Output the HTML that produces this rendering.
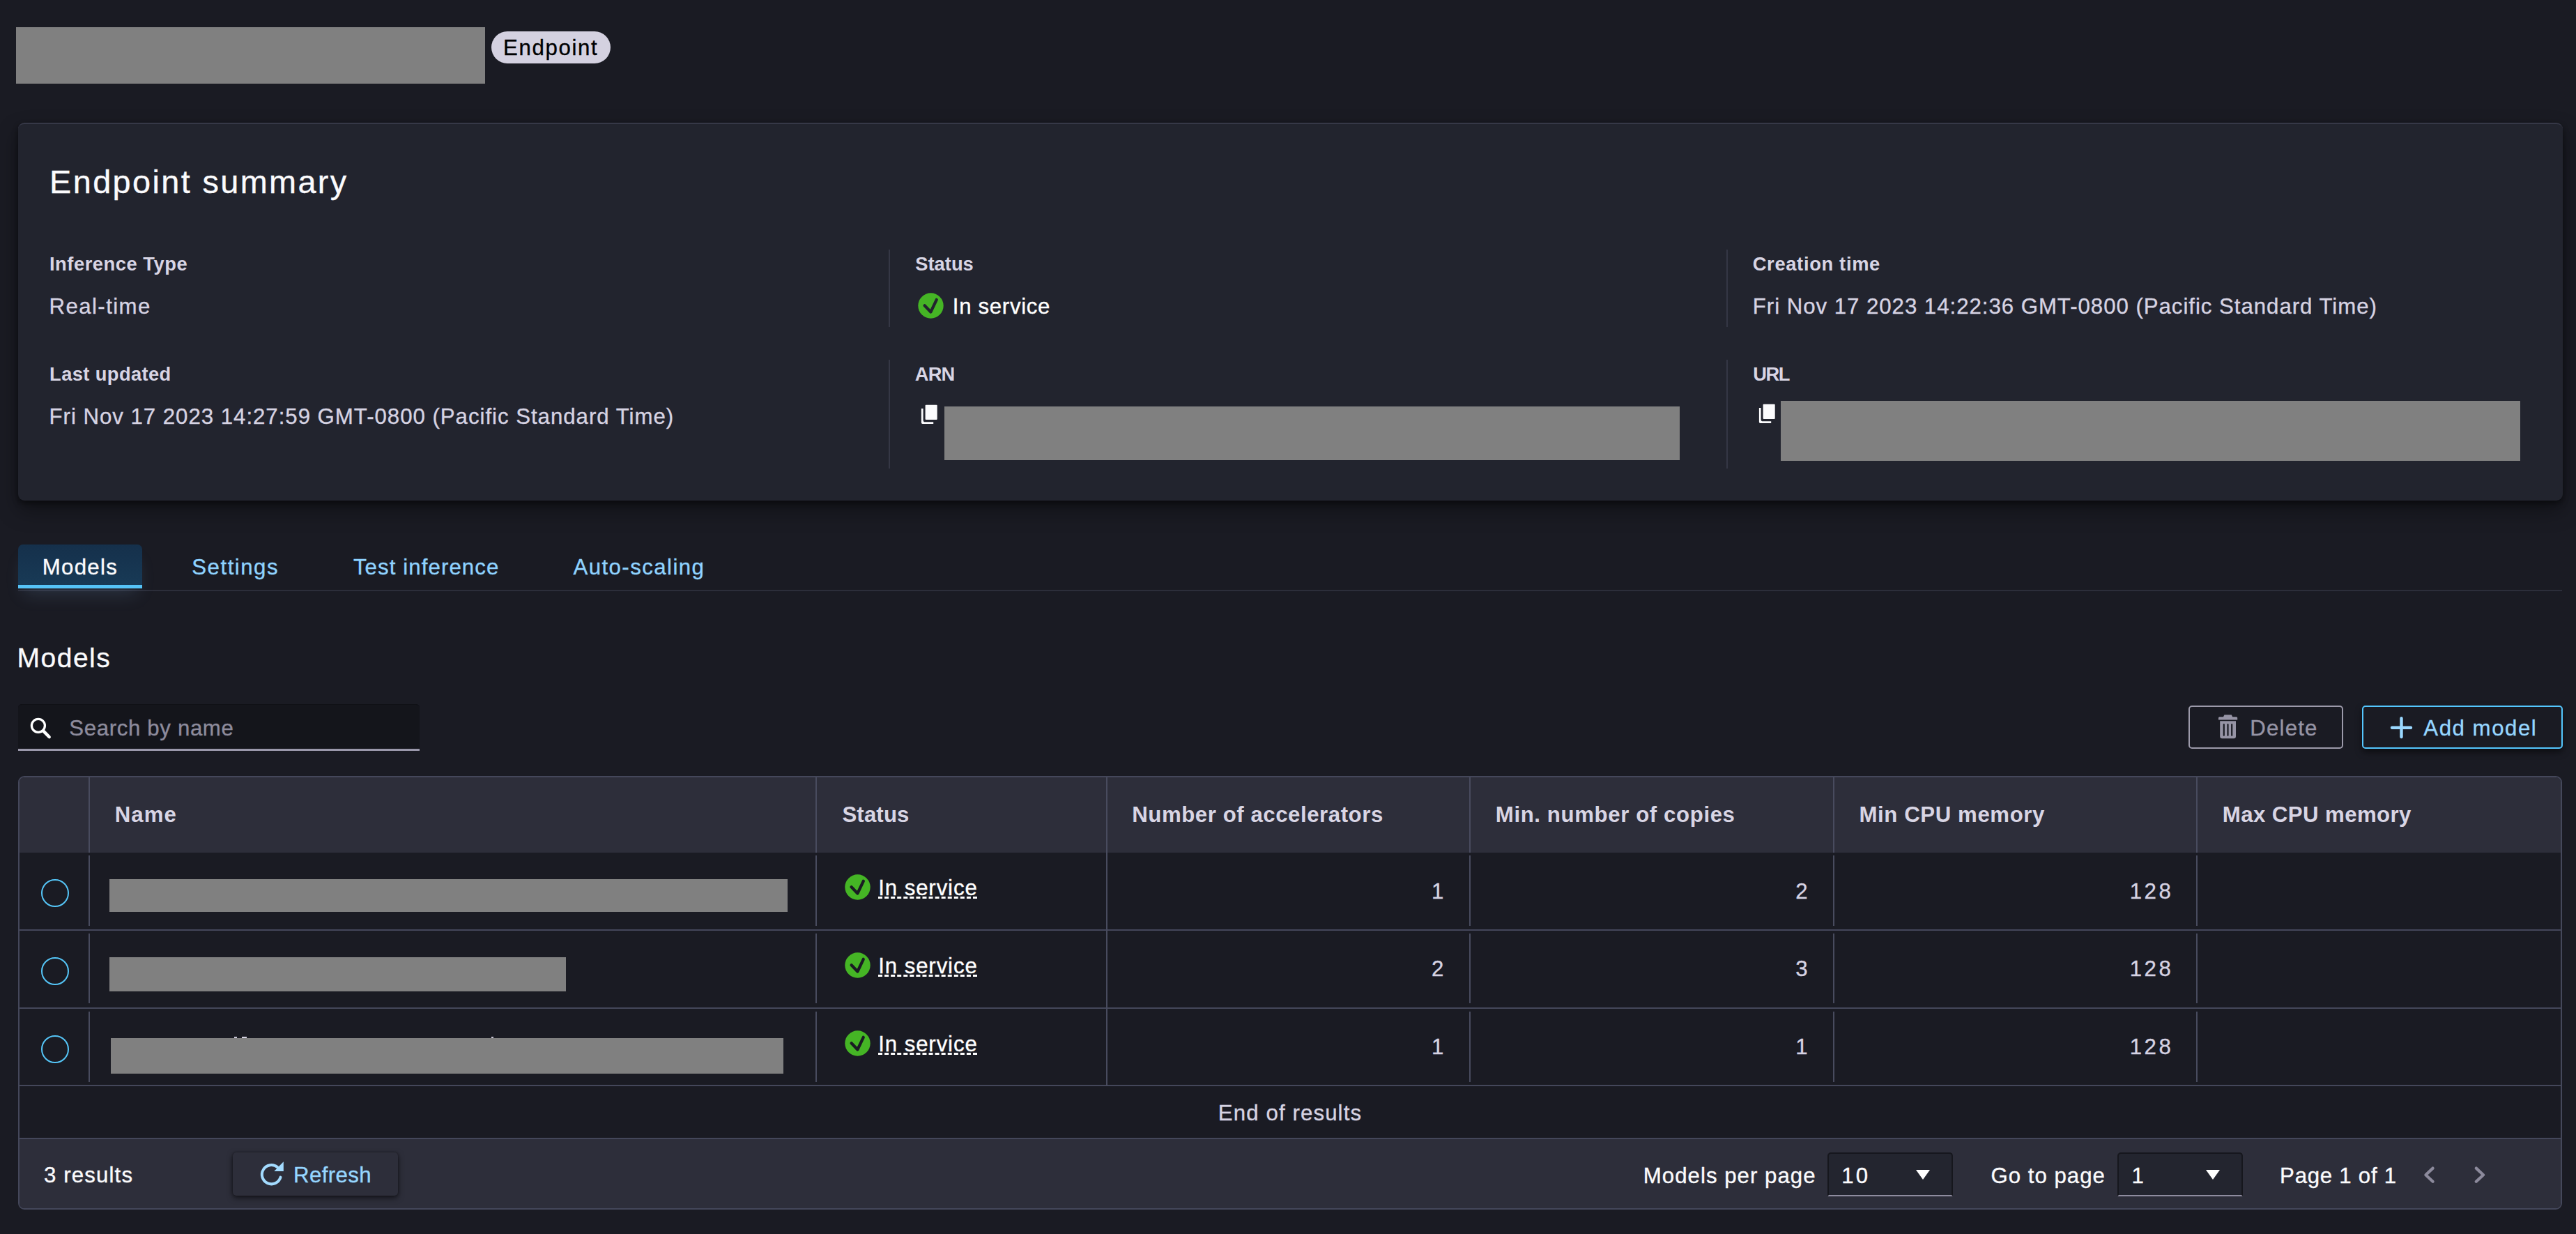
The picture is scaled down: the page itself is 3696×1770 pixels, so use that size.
<!DOCTYPE html>
<html lang="en">
<head>
<meta charset="utf-8">
<title>Endpoint details</title>
<style>
html,body{margin:0;padding:0}
body{width:3696px;height:1770px;background:#1a1b23;position:relative;overflow:hidden;font-family:"Liberation Sans", sans-serif}
h2,dl,dt,dd{margin:0;padding:0}
.t{position:absolute;margin:0;white-space:nowrap;font-family:"Liberation Sans", sans-serif;font-weight:400;-webkit-text-stroke:0.35px currentColor}
.t.bd{font-weight:700;-webkit-text-stroke:0}
.lnk{text-decoration:underline dashed;text-decoration-thickness:3px;text-underline-offset:1.5px;text-decoration-skip-ink:none}
.b{position:absolute;box-sizing:border-box}
.g{background:#808080}
.card{left:26px;top:176px;width:3651px;height:542px;background:#22242e;border-radius:9px;border-top:2px solid #363847;box-shadow:0 14px 30px rgba(0,0,0,.36),0 4px 8px rgba(0,0,0,.45)}
.vd{width:2px;background:#353745}
.badge{left:705px;top:45px;width:171px;height:46px;border-radius:23px;background:#d4d1e0}
.tab{left:26px;top:781px;width:178px;height:63px;border-radius:7px 7px 0 0;background:linear-gradient(#15304b,#183a56);border-bottom:5px solid #55c3f7;box-shadow:0 16px 26px -8px rgba(130,175,225,.17)}
.tabline{left:26px;top:846px;width:3650px;height:2px;background:#2c2e3a}
.search{left:26px;top:1010px;width:576px;height:67px;background:#14151b;border-radius:5px 5px 0 0;border-bottom:3px solid #9a98ab;border-top:1px solid #101116}
.btn{top:1012px;height:62px;border-radius:5px;border:2px solid #9c9aaa}
.btn.add{border-color:#54c7ff;box-shadow:0 5px 10px rgba(0,0,0,.5)}
.table{left:26px;top:1113px;width:3650px;height:622px;border:2px solid #44475a;border-radius:9px;overflow:hidden;background:#1a1b23}
.th{left:0;top:0;width:100%;height:108px;background:#2d2e3a}
.tf{left:0;top:517px;width:100%;height:101px;background:#2d2e3a;border-top:2px solid #44475a}
.hl{left:0;width:100%;height:2px;background:#44475a}
.cd{width:2px;background:#484b5e}
.radio{width:40px;height:40px;border-radius:50%;border:2px solid #55c6f8}
.sel{top:1653px;height:63px;background:#23252f;border:2px solid #16171d;border-bottom:2px solid #8e8c9f;border-radius:5px 5px 0 0}
.tri{width:0;height:0;border-left:10.5px solid transparent;border-right:10.5px solid transparent;border-top:14px solid #fff}
.refresh{left:334px;top:1653px;width:237px;height:62px;background:#2d2e3a;border-radius:5px;box-shadow:0 3px 8px rgba(0,0,0,.6),0 0 3px rgba(0,0,0,.35)}
svg{position:absolute;overflow:visible}
</style>
</head>
<body>
<header>
 <div class="b g" style="left:23px;top:39px;width:673px;height:81px"></div>
 <div class="b badge"></div>
 <span class="t" style="left:722.0px;top:52.9px;font-size:31.20px;line-height:31.20px;color:#000;letter-spacing:1.65px">Endpoint</span>
</header>

<section aria-label="Endpoint summary">
 <div class="b card"></div>
 <h2 class="t" style="left:71.1px;top:237.9px;font-size:46.80px;line-height:46.80px;color:#fbfbfd;letter-spacing:2.40px">Endpoint summary</h2>
 <dl>
  <div>
  <dt class="t bd" style="left:71.0px;top:365.2px;font-size:27.30px;line-height:27.30px;color:#d8d5e4;letter-spacing:0.54px">Inference Type</dt>
  <dd class="t" style="left:70.5px;top:424.1px;font-size:31.20px;line-height:31.20px;color:#d6d3e2;letter-spacing:1.42px">Real-time</dd>
  </div>
  <div>
  <div class="b vd" style="left:1275px;top:358px;height:111px"></div>
  <svg style="left:1317px;top:420px" width="37" height="37" viewBox="0 0 37 37"><circle cx="18.5" cy="18.5" r="18.2" fill="#45b525"/><path d="M9.6 18.2 L18.4 27.5 L26.8 9.8" fill="none" stroke="#22242e" stroke-width="4.2" stroke-linecap="round" stroke-linejoin="round"/></svg>
  <dt class="t bd" style="left:1313.2px;top:365.2px;font-size:27.30px;line-height:27.30px;color:#d8d5e4;letter-spacing:0.03px">Status</dt>
  <dd class="t" style="left:1366.8px;top:423.7px;font-size:31.20px;line-height:31.20px;color:#fff;letter-spacing:0.68px">In service</dd>
  </div>
  <div>
  <div class="b vd" style="left:2477px;top:358px;height:111px"></div>
  <dt class="t bd" style="left:2514.7px;top:365.2px;font-size:27.30px;line-height:27.30px;color:#d8d5e4;letter-spacing:0.68px">Creation time</dt>
  <dd class="t" style="left:2514.8px;top:424.2px;font-size:31.20px;line-height:31.20px;color:#d6d3e2;letter-spacing:0.97px">Fri Nov 17 2023 14:22:36 GMT-0800 (Pacific Standard Time)</dd>
  </div>
  <div>
  <dt class="t bd" style="left:71.1px;top:522.7px;font-size:27.30px;line-height:27.30px;color:#d8d5e4;letter-spacing:0.39px">Last updated</dt>
  <dd class="t" style="left:70.5px;top:581.9px;font-size:31.20px;line-height:31.20px;color:#d6d3e2;letter-spacing:0.98px">Fri Nov 17 2023 14:27:59 GMT-0800 (Pacific Standard Time)</dd>
  </div>
  <div>
  <div class="b vd" style="left:1275px;top:516px;height:156px"></div>
  <dt class="t bd" style="left:1312.8px;top:523.2px;font-size:27.30px;line-height:27.30px;color:#d8d5e4;letter-spacing:-0.81px">ARN</dt>
  <svg style="left:1321px;top:580px" width="26" height="30" viewBox="0 0 26 30"><rect x="6.6" y="0.7" width="17.1" height="21.4" rx="1" fill="#fbfbfd"/><path d="M0.9 6.1 H3.6 V22.4 a2.9 2.9 0 0 0 2.9 2.9 H18.2 V28 H2.6 a1.7 1.7 0 0 1 -1.7 -1.7 Z" fill="#fbfbfd"/></svg>
  <dd class="b g" style="left:1355px;top:583px;width:1055px;height:77px"></dd>
  </div>
  <div>
  <div class="b vd" style="left:2477px;top:516px;height:156px"></div>
  <dt class="t bd" style="left:2515.3px;top:523.2px;font-size:27.30px;line-height:27.30px;color:#d8d5e4;letter-spacing:-1.51px">URL</dt>
  <svg style="left:2523px;top:579px" width="26" height="30" viewBox="0 0 26 30"><rect x="6.6" y="0.7" width="17.1" height="21.4" rx="1" fill="#fbfbfd"/><path d="M0.9 6.1 H3.6 V22.4 a2.9 2.9 0 0 0 2.9 2.9 H18.2 V28 H2.6 a1.7 1.7 0 0 1 -1.7 -1.7 Z" fill="#fbfbfd"/></svg>
  <dd class="b g" style="left:2555px;top:575px;width:1061px;height:86px"></dd>
  </div>
 </dl>
</section>

<nav role="tablist">
 <div class="b tabline"></div>
 <div class="b tab"></div>
 <span class="t" role="tab" aria-selected="true" style="left:60.7px;top:797.7px;font-size:31.20px;line-height:31.20px;color:#fbfbfd;letter-spacing:1.31px">Models</span>
 <span class="t" role="tab" style="left:275.3px;top:797.9px;font-size:31.20px;line-height:31.20px;color:#8fd3ff;letter-spacing:1.51px">Settings</span>
 <span class="t" role="tab" style="left:506.9px;top:797.9px;font-size:31.20px;line-height:31.20px;color:#8fd3ff;letter-spacing:1.10px">Test inference</span>
 <span class="t" role="tab" style="left:822.4px;top:797.9px;font-size:31.20px;line-height:31.20px;color:#8fd3ff;letter-spacing:1.45px">Auto-scaling</span>
</nav>

<section aria-label="Models">
 <h2 class="t" style="left:24.6px;top:923.7px;font-size:39.00px;line-height:39.00px;color:#fbfbfd;letter-spacing:1.48px">Models</h2>
 <div class="toolbar">
  <div class="b search" role="searchbox"></div>
  <svg style="left:43px;top:1029px" width="32" height="32" viewBox="0 0 32 32"><circle cx="11.9" cy="11.8" r="9.5" fill="none" stroke="#fff" stroke-width="3.3"/><path d="M19.6 19.8 L27.6 28" stroke="#fff" stroke-width="4.6" stroke-linecap="round"/></svg>
  <span class="t" style="left:99.3px;top:1028.6px;font-size:31.20px;line-height:31.20px;color:#8d8b9c;letter-spacing:0.65px">Search by name</span>
  <div role="button" aria-disabled="true">
   <div class="b btn" style="left:3140px;width:222px"></div>
   <svg style="left:3183px;top:1025px" width="28" height="35" viewBox="0 0 28 35"><path d="M7 3.2 L8.5 0.2 H18.7 L20.2 3.2 H25.7 a1.5 1.5 0 0 1 1.5 1.5 V7.4 H0 V4.7 a1.5 1.5 0 0 1 1.5 -1.5 Z" fill="#9694a5"/><path d="M2.2 9.3 H25 V31.3 a3 3 0 0 1 -3 3 H5.2 a3 3 0 0 1 -3 -3 Z" fill="#9694a5"/><path d="M7.8 14.2 V29.7 M13.5 14.2 V29.7 M19.2 14.2 V29.7" stroke="#1a1b23" stroke-width="2.2" stroke-linecap="round"/></svg>
   <span class="t" style="left:3228.3px;top:1028.9px;font-size:31.20px;line-height:31.20px;color:#9694a5;letter-spacing:1.20px">Delete</span>
  </div>
  <div role="button">
   <div class="b btn add" style="left:3389px;width:288px"></div>
   <svg style="left:3429px;top:1028px" width="33" height="32" viewBox="0 0 33 32"><path d="M3 15.7 H30 M16.5 2.3 V29" stroke="#9ad8ff" stroke-width="4.4" stroke-linecap="round"/></svg>
   <span class="t" style="left:3477.3px;top:1028.9px;font-size:31.20px;line-height:31.20px;color:#96d6ff;letter-spacing:1.54px">Add model</span>
  </div>
 </div>

 <div role="table">
  <div class="b table">
   <div class="b th"></div>
   <div class="b hl" style="top:218px"></div>
   <div class="b hl" style="top:330px"></div>
   <div class="b hl" style="top:441px"></div>
   <div class="b tf"></div>
   <div class="b cd" style="left:99px;top:0;height:108px"></div>
   <div class="b cd" style="left:99px;top:112px;height:100.7px"></div>
   <div class="b cd" style="left:99px;top:223.8px;height:100.6px"></div>
   <div class="b cd" style="left:99px;top:336px;height:100.5px"></div>
   <div class="b cd" style="left:1142px;top:0;height:108px"></div>
   <div class="b cd" style="left:1142px;top:112px;height:100.7px"></div>
   <div class="b cd" style="left:1142px;top:223.8px;height:100.6px"></div>
   <div class="b cd" style="left:1142px;top:336px;height:100.5px"></div>
   <div class="b cd" style="left:1559px;top:0;height:108px"></div>
   <div class="b cd" style="left:1559px;top:108px;height:335px"></div>
   <div class="b cd" style="left:2080px;top:0;height:108px"></div>
   <div class="b cd" style="left:2080px;top:112px;height:100.7px"></div>
   <div class="b cd" style="left:2080px;top:223.8px;height:100.6px"></div>
   <div class="b cd" style="left:2080px;top:336px;height:100.5px"></div>
   <div class="b cd" style="left:2602px;top:0;height:108px"></div>
   <div class="b cd" style="left:2602px;top:112px;height:100.7px"></div>
   <div class="b cd" style="left:2602px;top:223.8px;height:100.6px"></div>
   <div class="b cd" style="left:2602px;top:336px;height:100.5px"></div>
   <div class="b cd" style="left:3123px;top:0;height:108px"></div>
   <div class="b cd" style="left:3123px;top:112px;height:100.7px"></div>
   <div class="b cd" style="left:3123px;top:223.8px;height:100.6px"></div>
   <div class="b cd" style="left:3123px;top:336px;height:100.5px"></div>
  </div>
  <div class="row" role="row">
   <span class="t bd" role="columnheader" style="left:164.7px;top:1152.9px;font-size:31.20px;line-height:31.20px;color:#d8d5e4;letter-spacing:1.07px">Name</span>
   <span class="t bd" role="columnheader" style="left:1208.4px;top:1152.9px;font-size:31.20px;line-height:31.20px;color:#d8d5e4;letter-spacing:0.15px">Status</span>
   <span class="t bd" role="columnheader" style="left:1624.3px;top:1152.9px;font-size:31.20px;line-height:31.20px;color:#d8d5e4;letter-spacing:0.55px">Number of accelerators</span>
   <span class="t bd" role="columnheader" style="left:2145.8px;top:1152.9px;font-size:31.20px;line-height:31.20px;color:#d8d5e4;letter-spacing:0.61px">Min. number of copies</span>
   <span class="t bd" role="columnheader" style="left:2667.5px;top:1152.9px;font-size:31.20px;line-height:31.20px;color:#d8d5e4;letter-spacing:0.59px">Min CPU memory</span>
   <span class="t bd" role="columnheader" style="left:3188.8px;top:1152.9px;font-size:31.20px;line-height:31.20px;color:#d8d5e4;letter-spacing:0.42px">Max CPU memory</span>
  </div>
  <div class="row" role="row">
   <div class="b radio" role="radio" aria-checked="false" style="left:59.0px;top:1260.9px"></div>
   <div class="b g" role="cell" style="left:157px;top:1260.9px;width:972.8px;height:47.1px"></div>
   <svg style="left:1212px;top:1254.3px" width="37" height="37" viewBox="0 0 37 37"><circle cx="18.5" cy="18.5" r="18.2" fill="#45b525"/><path d="M9.6 18.2 L18.4 27.5 L26.8 9.8" fill="none" stroke="#1a1b23" stroke-width="4.2" stroke-linecap="round" stroke-linejoin="round"/></svg>
   <span class="t lnk" role="cell" style="left:1260.3px;top:1258.1px;font-size:31.20px;line-height:31.20px;color:#fff;letter-spacing:0.89px">In service</span>
   <span class="t" role="cell" style="left:2054.0px;top:1262.6px;font-size:31.20px;line-height:31.20px;color:#d6d3e2;letter-spacing:0.60px">1</span>
   <span class="t" role="cell" style="left:2576.2px;top:1262.6px;font-size:31.20px;line-height:31.20px;color:#d6d3e2;letter-spacing:0.60px">2</span>
   <span class="t" role="cell" style="left:3055.7px;top:1262.6px;font-size:31.20px;line-height:31.20px;color:#d6d3e2;letter-spacing:3.55px">128</span>
  </div>
  <div class="row" role="row">
   <div class="b radio" role="radio" aria-checked="false" style="left:59.0px;top:1373.1px"></div>
   <div class="b g" role="cell" style="left:157px;top:1373px;width:654.6px;height:48.5px"></div>
   <svg style="left:1212px;top:1366.2px" width="37" height="37" viewBox="0 0 37 37"><circle cx="18.5" cy="18.5" r="18.2" fill="#45b525"/><path d="M9.6 18.2 L18.4 27.5 L26.8 9.8" fill="none" stroke="#1a1b23" stroke-width="4.2" stroke-linecap="round" stroke-linejoin="round"/></svg>
   <span class="t lnk" role="cell" style="left:1260.3px;top:1369.8px;font-size:31.20px;line-height:31.20px;color:#fff;letter-spacing:0.89px">In service</span>
   <span class="t" role="cell" style="left:2054.0px;top:1374.3px;font-size:31.20px;line-height:31.20px;color:#d6d3e2;letter-spacing:0.60px">2</span>
   <span class="t" role="cell" style="left:2576.2px;top:1374.3px;font-size:31.20px;line-height:31.20px;color:#d6d3e2;letter-spacing:0.60px">3</span>
   <span class="t" role="cell" style="left:3055.7px;top:1374.3px;font-size:31.20px;line-height:31.20px;color:#d6d3e2;letter-spacing:3.55px">128</span>
  </div>
  <div class="row" role="row">
   <div class="b radio" role="radio" aria-checked="false" style="left:59.0px;top:1484.7px"></div>
   <div class="b" style="left:336px;top:1487.4px;width:4px;height:1.6px;background:#c9c6d6"></div><div class="b" style="left:347px;top:1487.2px;width:7px;height:1.8px;background:#d6d3e2"></div><div class="b" style="left:704.5px;top:1487.4px;width:3px;height:1.6px;background:#c9c6d6"></div>
   <div class="b g" role="cell" style="left:158.9px;top:1489px;width:965.1px;height:50.5px"></div>
   <svg style="left:1212px;top:1478.1px" width="37" height="37" viewBox="0 0 37 37"><circle cx="18.5" cy="18.5" r="18.2" fill="#45b525"/><path d="M9.6 18.2 L18.4 27.5 L26.8 9.8" fill="none" stroke="#1a1b23" stroke-width="4.2" stroke-linecap="round" stroke-linejoin="round"/></svg>
   <span class="t lnk" role="cell" style="left:1260.3px;top:1481.5px;font-size:31.20px;line-height:31.20px;color:#fff;letter-spacing:0.89px">In service</span>
   <span class="t" role="cell" style="left:2054.0px;top:1486.0px;font-size:31.20px;line-height:31.20px;color:#d6d3e2;letter-spacing:0.60px">1</span>
   <span class="t" role="cell" style="left:2576.2px;top:1486.0px;font-size:31.20px;line-height:31.20px;color:#d6d3e2;letter-spacing:0.60px">1</span>
   <span class="t" role="cell" style="left:3055.7px;top:1486.0px;font-size:31.20px;line-height:31.20px;color:#d6d3e2;letter-spacing:3.55px">128</span>
  </div>
  <div class="row" role="row">
   <span class="t" style="left:1747.8px;top:1581.4px;font-size:31.20px;line-height:31.20px;color:#d6d3e2;letter-spacing:1.12px">End of results</span>
  </div>
  <div class="tfoot">
   <span class="t" style="left:63.0px;top:1669.9px;font-size:31.20px;line-height:31.20px;color:#fbfbfd;letter-spacing:1.14px">3 results</span>
   <div role="button">
    <div class="b refresh"></div>
    <svg style="left:373px;top:1664.8px" width="36" height="36" viewBox="0 0 36 36"><path d="M25.2 9.3 A13.6 13.6 0 1 0 29.5 23.6" fill="none" stroke="#a3dbff" stroke-width="4" stroke-linecap="round"/><path d="M33.8 1.2 V14.9 H20.3 Z" fill="#a3dbff"/></svg>
    <span class="t" style="left:421.1px;top:1669.7px;font-size:31.20px;line-height:31.20px;color:#96d6ff;letter-spacing:0.37px">Refresh</span>
   </div>
   <div>
    <div class="b sel" role="combobox" style="left:2622px;width:180px"></div>
    <div class="b tri" style="left:2749px;top:1678px"></div>
    <span class="t" style="left:2357.8px;top:1670.5px;font-size:31.20px;line-height:31.20px;color:#fbfbfd;letter-spacing:1.03px">Models per page</span>
    <span class="t" style="left:2642.3px;top:1670.5px;font-size:31.20px;line-height:31.20px;color:#fbfbfd;letter-spacing:3.05px">10</span>
   </div>
   <div>
    <div class="b sel" role="combobox" style="left:3038px;width:180px"></div>
    <div class="b tri" style="left:3165px;top:1678px"></div>
    <span class="t" style="left:2856.4px;top:1670.5px;font-size:31.20px;line-height:31.20px;color:#fbfbfd;letter-spacing:1.02px">Go to page</span>
    <span class="t" style="left:3058.4px;top:1670.5px;font-size:31.20px;line-height:31.20px;color:#fbfbfd;letter-spacing:0.00px">1</span>
   </div>
   <div>
    <span class="t" style="left:3271.1px;top:1670.5px;font-size:31.20px;line-height:31.20px;color:#fbfbfd;letter-spacing:0.75px">Page 1 of 1</span>
    <svg style="left:3476px;top:1672px" width="20" height="27" viewBox="0 0 20 27"><path d="M14.6 3.6 L4.4 13.2 L14.6 22.8" fill="none" stroke="#8c8a9c" stroke-width="4.2" stroke-linecap="round" stroke-linejoin="round"/></svg>
    <svg style="left:3548px;top:1672px" width="20" height="27" viewBox="0 0 20 27"><path d="M4.8 3.6 L15 13.2 L4.8 22.8" fill="none" stroke="#8c8a9c" stroke-width="4.2" stroke-linecap="round" stroke-linejoin="round"/></svg>
   </div>
  </div>
 </div>
</section>
</body>
</html>
